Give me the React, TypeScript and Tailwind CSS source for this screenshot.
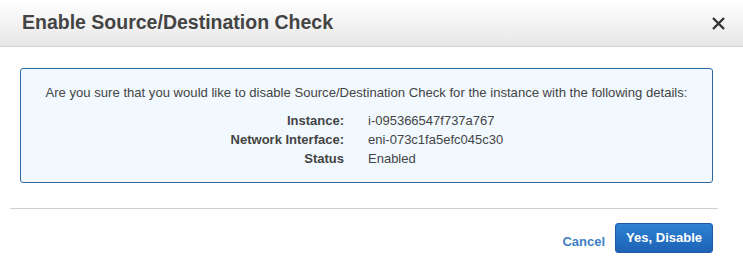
export default function App() {
  const rows = [
    ["Instance:", "i-095366547f737a767"],
    ["Network Interface:", "eni-073c1fa5efc045c30"],
    ["Status", "Enabled"],
  ];

  return (
    <div className="h-[263px] w-[743px] overflow-hidden bg-white font-['Liberation_Sans',Arial,sans-serif] text-[#444]">
      <header className="flex h-[47px] items-center justify-between border-b border-[#d5d5d5] bg-gradient-to-b from-white to-[#e7e7e7] pl-[22px] pr-[17px]">
        <h1 className="text-[19.5px] font-bold whitespace-nowrap text-[#444]">
          Enable Source/Destination Check
        </h1>
        <button className="text-[#333]" aria-label="Close">
          <svg width="15" height="15" viewBox="0 0 15 15">
            <path d="M2 2 L13 13 M13 2 L2 13" stroke="currentColor" strokeWidth="2.4" />
          </svg>
        </button>
      </header>

      <div className="pl-[20px] pr-[30px] pt-[21px]">
        <div className="flex h-[115px] flex-col items-center rounded-[3px] border border-[#2d6aa3] bg-[#f1f8fe] pt-[15px] text-[13px]">
          <p className="text-[13.1px] leading-[18px]">
            Are you sure that you would like to disable Source/Destination Check for the instance with the following details:
          </p>
          <div className="mt-[9px] grid grid-cols-[323px_1fr] gap-x-[24px] self-stretch leading-[19px]">
            {rows.map(([k, v]) => (
              <div key={k} className="contents">
                <span className="text-right font-bold">{k}</span>
                <span>{v}</span>
              </div>
            ))}
          </div>
        </div>
      </div>

      <div className="ml-[10px] mr-[25px] mt-[25px] border-t border-[#cfcfcf]" />

      <div className="flex items-center justify-end gap-[10px] pr-[30px] pt-[14px]">
        <button className="mt-[8px] text-[13px] font-bold text-[#3f7fc5]">Cancel</button>
        <button className="h-[30px] rounded-[3px] border border-[#1b5ba8] bg-gradient-to-b from-[#2e82d4] to-[#1d62b5] px-[10px] text-[13px] font-bold text-white">
          Yes, Disable
        </button>
      </div>
    </div>
  );
}
